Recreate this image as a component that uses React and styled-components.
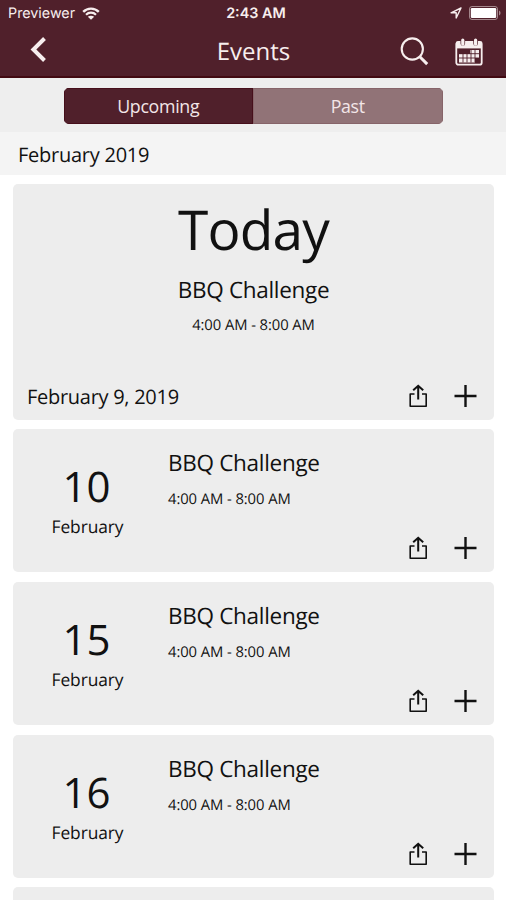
import React from 'react';
import styled, { createGlobalStyle } from 'styled-components';

const { useState } = React;

const GlobalStyle = createGlobalStyle`
  * {
    box-sizing: border-box;
  }
  body {
    margin: 0;
    background: #fff;
    color: #111;
    font-family: 'Open Sans', 'Noto Sans', sans-serif;
    text-rendering: geometricPrecision;
  }
  button {
    border: none;
    padding: 0;
    background: none;
    color: inherit;
    font: inherit;
    cursor: pointer;
  }
  svg {
    display: block;
  }
`;

const Screen = styled.div`
  height: 900px;
  overflow: hidden;
  display: flex;
  flex-direction: column;
`;

const Header = styled.header`
  flex: none;
  height: 78px;
  background: #50202b;
  border-bottom: 2px solid #420a12;
  color: #f7eeee;
`;

const StatusBar = styled.div`
  height: 26px;
  padding: 0 5px 0 8px;
  display: grid;
  grid-template-columns: 1fr auto 1fr;
  align-items: center;
  font-family: Inter, 'Liberation Sans', sans-serif;
`;

const Carrier = styled.div`
  display: flex;
  align-items: center;
  gap: 7px;
  font-size: 14.3px;
`;

const Clock = styled.div`
  padding-left: 3px;
  font-size: 14.4px;
  font-weight: 600;
`;

const StatusIcons = styled.div`
  display: flex;
  align-items: center;
  justify-content: flex-end;
  gap: 7px;
`;

const NavBar = styled.nav`
  height: 50px;
  padding: 1px 23px 0 30px;
  display: grid;
  grid-template-columns: 1fr auto 1fr;
  align-items: center;
`;

const Title = styled.h1`
  margin: 0;
  padding-right: 6px;
  font-size: 24px;
  font-weight: 400;
  line-height: 48px;
`;

const NavActions = styled.div`
  display: flex;
  align-items: center;
  justify-content: flex-end;
  gap: 26px;
`;

const TabBar = styled.div`
  flex: none;
  height: 54px;
  padding-top: 10px;
  display: flex;
  justify-content: center;
  background: #eee;
`;

const Tabs = styled.div`
  width: 379px;
  height: 36px;
  display: flex;
  overflow: hidden;
  border-radius: 5px;
`;

const Tab = styled.button`
  flex: 1;
  background: ${({ $active }) => ($active ? '#50202b' : '#917377')};
  box-shadow: inset 0 0 0 1px ${({ $active }) => ($active ? '#460f1b' : '#866469')};
  color: #f3e6e8;
  && {
    font-size: 17.8px;
    line-height: 36px;
    letter-spacing: -0.3px;
  }
`;

const MonthHeading = styled.h2`
  flex: none;
  margin: 0;
  height: 43px;
  padding-left: 18px;
  background: #f4f4f4;
  font-size: 20px;
  font-weight: 400;
  line-height: 46px;
  letter-spacing: -0.25px;
`;

const EventList = styled.main`
  padding: 9px 12px 0 13px;
  display: flex;
  flex-direction: column;
  gap: 9.3px;
`;

const Card = styled.article`
  flex: none;
  background: #ededed;
  border-radius: 5px;
`;

const TodayCard = styled(Card)`
  height: 235.7px;
  display: flex;
  flex-direction: column;
  align-items: center;
`;

const TodayLabel = styled.div`
  margin-top: 8px;
  font-size: 55px;
  line-height: 75px;
  letter-spacing: -0.8px;
`;

const EventName = styled.h3`
  margin: 0;
  font-size: 22.5px;
  font-weight: 400;
  line-height: 31px;
  letter-spacing: -0.3px;
`;

const EventTime = styled.div`
  margin-top: 11px;
  font-size: 14.8px;
  line-height: 20px;
  letter-spacing: -0.08px;
`;

const TodayName = styled(EventName)`
  margin-top: 7px;

  & + ${EventTime} {
    margin-top: 10px;
  }
`;

const TodayFooter = styled.div`
  width: 100%;
  margin-top: auto;
  padding: 0 16px 10px 14px;
  display: flex;
  align-items: flex-end;
  justify-content: space-between;
`;

const FullDate = styled.div`
  font-size: 20px;
  line-height: 26px;
  letter-spacing: -0.28px;
`;

const Actions = styled.div`
  padding-bottom: 2px;
  display: flex;
  align-items: center;
  gap: 26px;
`;

const DayCard = styled(Card)`
  height: 143.5px;
  display: grid;
  grid-template-columns: 155px 1fr;
`;

const DateColumn = styled.div`
  padding: 29px 6px 0 0;
  text-align: center;
`;

const DayNumber = styled.div`
  padding-right: 2px;
  font-size: 42px;
  line-height: 57px;
`;

const MonthName = styled.div`
  font-size: 17.4px;
  line-height: 24px;
  letter-spacing: -0.1px;
`;

const Details = styled.div`
  padding: 18px 16px 10px 0;
  display: flex;
  flex-direction: column;
`;

const DetailActions = styled(Actions)`
  margin-top: auto;
  align-self: flex-end;
`;

const WifiIcon = () => (
  <svg width="18" height="13" viewBox="0 0 18 13" fill="none" stroke="currentColor">
    <path d="M1.2 4.8C5.5.5 12.5.5 16.8 4.8" strokeWidth="2.4" />
    <path d="M4 7.7c2.8-2.7 7.2-2.7 10 0" strokeWidth="2.2" />
    <path d="M9 12.8 5.8 9.8c1.8-1.5 4.6-1.5 6.4 0z" fill="currentColor" stroke="none" />
  </svg>
);

const LocationIcon = () => (
  <svg width="12" height="12" viewBox="0 0 12 12" fill="none" stroke="currentColor" strokeWidth="1.4" strokeLinejoin="round">
    <path d="M11 1 1 5.8h5.2V11z" />
  </svg>
);

const BatteryIcon = () => (
  <svg width="32" height="14" viewBox="0 0 32 14">
    <rect x="0.5" y="0.5" width="28" height="13" rx="2.5" fill="none" stroke="currentColor" strokeOpacity="0.5" />
    <rect x="1.8" y="2" width="25.4" height="10" rx="1.2" fill="#fff" />
    <path d="M30 4.5c2 .8 2 4.2 0 5z" fill="currentColor" fillOpacity="0.5" />
  </svg>
);

const BackIcon = () => (
  <svg width="17" height="28" viewBox="0 0 17 28" fill="none" stroke="currentColor" strokeWidth="4">
    <path d="M14.5 3.5 3.4 14.5l11.1 11" />
  </svg>
);

const SearchIcon = () => (
  <svg width="29" height="29" viewBox="0 0 29 29" fill="none" stroke="currentColor">
    <circle cx="12.3" cy="12" r="10.6" strokeWidth="2.1" />
    <path d="m19.8 19.7 7.4 7.4" strokeWidth="3" />
  </svg>
);

const CalendarIcon = () => (
  <svg width="28" height="28" viewBox="0 0 28 28">
    <rect x="1.3" y="4" width="25.4" height="22.7" rx="2" fill="none" stroke="currentColor" strokeWidth="1.8" />
    <path d="M1.3 3.6h25.4v6.8H1.3z" fill="currentColor" />
    <path d="M7.8 1.5v4M20.6 1.5v4" stroke="#50202b" strokeWidth="4.6" strokeLinecap="round" />
    <path d="M7.8 2v4.2M20.6 2v4.2" stroke="currentColor" strokeWidth="3.2" strokeLinecap="round" />
    <path d="M15 12h9v8h-9zM4 16h12v4H4zM4 20h16v4.4H4z" fill="currentColor" />
    <path d="M4 15.7h20M4 20h20M8 15.5v9M12 15.5v9M16 12v12.5M20 12v12.5" stroke="#50202b" strokeWidth="0.9" />
  </svg>
);

const ShareIcon = () => (
  <svg width="20" height="24" viewBox="0 0 20 24" fill="none" stroke="currentColor">
    <path d="M6.5 10H2.2V22.2h16V10H14" strokeWidth="1.6" strokeLinejoin="round" />
    <path d="M10.2 15.5V2.2M5.2 6.3l5-4.5 5 4.5" strokeWidth="2" />
  </svg>
);

const PlusIcon = () => (
  <svg width="24" height="24" viewBox="0 0 24 24" stroke="currentColor" strokeWidth="2.4">
    <path d="M11.5 1v22M.5 12h22" />
  </svg>
);

const events = [
  { id: 1, day: 10, month: 'February', name: 'BBQ Challenge', time: '4:00 AM - 8:00 AM' },
  { id: 2, day: 15, month: 'February', name: 'BBQ Challenge', time: '4:00 AM - 8:00 AM' },
  { id: 3, day: 16, month: 'February', name: 'BBQ Challenge', time: '4:00 AM - 8:00 AM' },
];

function EventActions() {
  return (
    <>
      <button type="button" aria-label="Share"><ShareIcon /></button>
      <button type="button" aria-label="Add"><PlusIcon /></button>
    </>
  );
}

function EventCard({ event }) {
  return (
    <DayCard>
      <DateColumn>
        <DayNumber>{event.day}</DayNumber>
        <MonthName>{event.month}</MonthName>
      </DateColumn>
      <Details>
        <EventName>{event.name}</EventName>
        <EventTime>{event.time}</EventTime>
        <DetailActions><EventActions /></DetailActions>
      </Details>
    </DayCard>
  );
}

function App() {
  const [tab, setTab] = useState('Upcoming');

  return (
    <Screen>
      <GlobalStyle />
      <Header>
        <StatusBar>
          <Carrier>
            Previewer
            <WifiIcon />
          </Carrier>
          <Clock>2:43 AM</Clock>
          <StatusIcons>
            <LocationIcon />
            <BatteryIcon />
          </StatusIcons>
        </StatusBar>
        <NavBar>
          <div>
            <button type="button" aria-label="Back"><BackIcon /></button>
          </div>
          <Title>Events</Title>
          <NavActions>
            <button type="button" aria-label="Search"><SearchIcon /></button>
            <button type="button" aria-label="Calendar"><CalendarIcon /></button>
          </NavActions>
        </NavBar>
      </Header>
      <TabBar>
        <Tabs>
          {['Upcoming', 'Past'].map((name) => (
            <Tab key={name} type="button" $active={tab === name} onClick={() => setTab(name)}>{name}</Tab>
          ))}
        </Tabs>
      </TabBar>
      <MonthHeading>February 2019</MonthHeading>
      <EventList>
        <TodayCard>
          <TodayLabel>Today</TodayLabel>
          <TodayName>BBQ Challenge</TodayName>
          <EventTime>4:00 AM - 8:00 AM</EventTime>
          <TodayFooter>
            <FullDate>February 9, 2019</FullDate>
            <Actions><EventActions /></Actions>
          </TodayFooter>
        </TodayCard>
        {events.map((event) => <EventCard key={event.id} event={event} />)}
        <DayCard />
      </EventList>
    </Screen>
  );
}

export default App;
